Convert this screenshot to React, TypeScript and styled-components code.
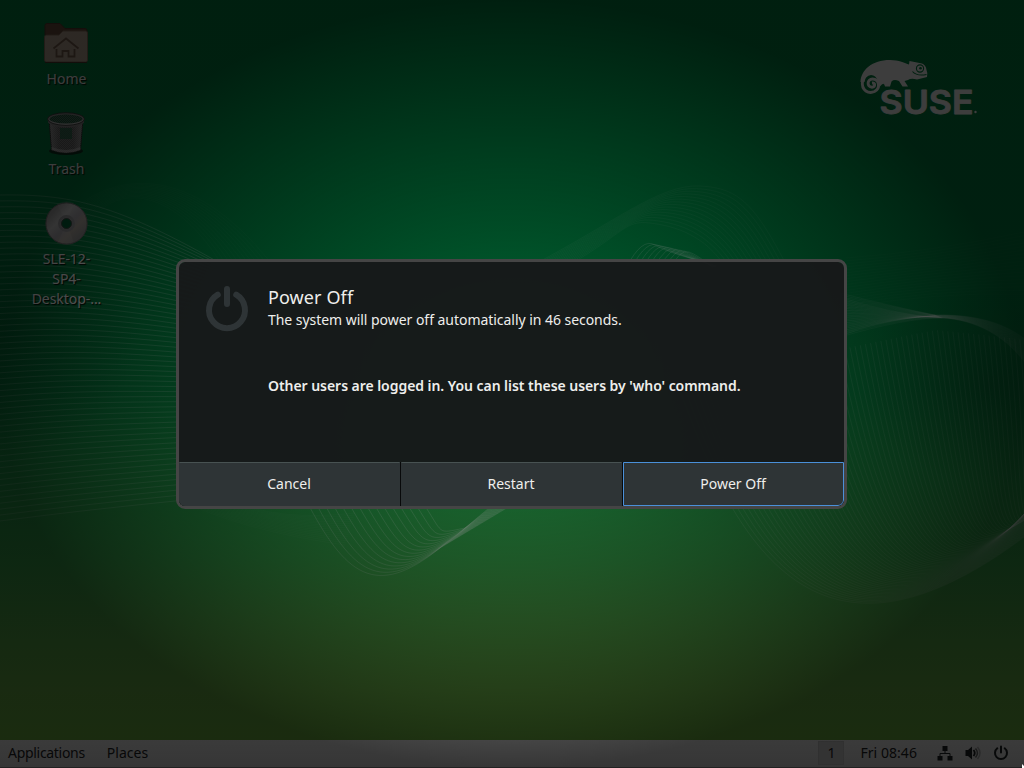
import React from "react";
import styled, { createGlobalStyle } from "styled-components";

const GlobalStyle = createGlobalStyle`
  * { box-sizing: border-box; }
  body { margin: 0; overflow: hidden; background: #000; }
`;

const Screen = styled.div`
  position: relative;
  display: flex;
  flex-direction: column;
  width: 1024px;
  height: 768px;
  overflow: hidden;
  font-family: "Noto Sans", "Open Sans", sans-serif;
  font-size: 14px;
  background: linear-gradient(
    #008240 0, #008442 290px, #088843 390px, #1f9646 480px,
    #36a149 560px, #4fa848 620px, #68b045 690px, #6cb43f 740px
  );
`;

const Waves = styled.svg`
  position: absolute;
  inset: 0;
  fill: none;
  stroke: #fff;
  stroke-width: 0.8;
`;

const Desktop = styled.main`
  position: relative;
  flex: 1;
  display: flex;
  justify-content: space-between;
  align-items: flex-start;
  padding: 18px 44px 0 20px;
`;

const Launchers = styled.div`
  display: flex;
  flex-direction: column;
  gap: 2px;
  width: 92px;
`;

const Launcher = styled.div`
  display: flex;
  flex-direction: column;
  align-items: center;
  min-height: 88px;
`;

const LauncherIcon = styled.svg`
  width: 48px;
  height: 48px;
  flex: none;
`;

const LauncherName = styled.span<{ $spacing?: number }>`
  margin-top: 3px;
  padding-left: 1px;
  color: #fff;
  line-height: 20px;
  text-align: center;
  white-space: pre-line;
  letter-spacing: ${(p) => p.$spacing ?? 0}px;
  text-shadow: 1px 1px 1px #000;
`;

const Logo = styled.svg`
  width: 120px;
  height: 60px;
  margin-top: 40px;
  overflow: visible;
`;

const Panel = styled.footer`
  position: relative;
  display: flex;
  align-items: center;
  height: 28px;
  padding: 0 15px 1px 8px;
  color: #1e2324;
  line-height: 26px;
  background: linear-gradient(#f4f4f4, #e2e2e2);
  border-bottom: 1px solid #8c8c8c;
`;

const PanelItem = styled.span<{ $gap?: number; $spacing?: number }>`
  margin-right: ${(p) => p.$gap ?? 0}px;
  letter-spacing: ${(p) => p.$spacing ?? 0}px;
`;

const Workspace = styled.span`
  width: 26px;
  height: 24px;
  margin: 0 16px 0 auto;
  line-height: 21px;
  text-align: center;
  background: #d4d4d4;
  border: 1px solid #cacaca;
`;

const Tray = styled.span`
  display: flex;
  align-items: center;
  gap: 12px;
`;

const TrayIcon = styled.svg`
  width: 16px;
  height: 16px;
  color: #1e2324;
`;

const Shade = styled.div`
  position: absolute;
  inset: 0;
  display: flex;
  align-items: center;
  justify-content: center;
  padding-right: 1px;
  background: radial-gradient(512px 384px at 50% 50%, rgba(0, 0, 0, 0.2), rgba(0, 0, 0, 0.76));
`;

const Dialog = styled.section`
  display: flex;
  flex-direction: column;
  width: 671px;
  height: 250px;
  overflow: hidden;
  color: #eeeeec;
  background: rgba(23, 25, 26, 0.97);
  background-clip: padding-box;
  border: 3px solid #454545;
  border-radius: 9px;
`;

const Body = styled.div`
  flex: 1;
  display: flex;
  gap: 17px;
  padding: 21px 24px 0;
`;

const PowerGlyph = styled.svg`
  width: 48px;
  height: 52px;
  color: #2e3436;
`;

const Message = styled.div`
  display: flex;
  flex-direction: column;
`;

const Title = styled.h1`
  margin: 2px 0 1px;
  font-size: 18px;
  font-weight: 400;
  line-height: 24px;
  letter-spacing: 0.1px;
`;

const Countdown = styled.p`
  margin: 0;
  line-height: 20px;
  letter-spacing: -0.04px;
`;

const Warning = styled.p`
  margin: 46px 0 0;
  font-weight: 600;
  line-height: 20px;
  letter-spacing: -0.05px;
`;

const Actions = styled.div`
  display: grid;
  grid-template-columns: repeat(3, 1fr);
  gap: 1px;
  height: 44px;
  background: #08090a;
`;

const Action = styled.button<{ $focused?: boolean }>`
  padding: 0 1px 1px 0;
  color: #eeeeec;
  font: inherit;
  background: #2e3436;
  border: 1px solid ${(p) => (p.$focused ? "#4a90d9" : "#2e3436")};
  border-top-color: ${(p) => (p.$focused ? "#4a90d9" : "#485252")};
  border-bottom-right-radius: ${(p) => (p.$focused ? 6 : 0)}px;
`;

const Pointer = styled.svg`
  position: absolute;
  right: 0;
  bottom: 0;
  width: 3px;
  height: 4px;
`;

type Wave = { d: string; o: number };

const series = (n: number, make: (u: number) => Wave): Wave[] =>
  Array.from({ length: n }, (_, i) => make(i / (n - 1)));

const waves: Wave[] = [
  ...series(56, (u) => ({
    d: `M0 ${195 + 326 * u}C70 ${194 + 318 * u} 115 ${203 + 304 * u} 225 ${266 + 230 * Math.pow(u, 1.25)}`,
    o: 0.26 - 0.06 * u,
  })),
  ...series(12, (u) => ({
    d: `M${70 + 20 * u} ${212 + 12 * u}C${115 - 5 * u} ${172 + 14 * u} ${190 - 20 * u} ${162 + 20 * u} ${270 - 50 * u} 262`,
    o: 0.04,
  })),
  ...series(15, (u) => ({
    d: `M${306 + 115 * u} 500C${345 + 100 * u} ${575 - 40 * u} ${375 + 60 * u} ${600 - 66 * u} ${440 + 25 * u} ${548 - 20 * u}L${520 - 25 * u} ${500 + 3 * u}`,
    o: 0.22,
  })),
  ...series(16, (u) => ({
    d: `M${180 + 50 * u} 500Q${240 + 40 * u} ${530 - 8 * u} ${345 + 10 * u} ${545 - 32 * u}`,
    o: 0.035,
  })),
  ...series(15, (u) => ({
    d: `M${535 + 36 * u} 264C${615 + 10 * u} ${222 + 10 * u} ${660 - 35 * u} ${184 + 36 * u} ${700 - 50 * u} ${186 + 37 * u}S${755 - 50 * u} ${205 + 30 * u} ${788 - 62 * u} 268`,
    o: 0.07,
  })),
  ...series(9, (u) => ({
    d: `M${626 + 45 * u} 268Q${642 + 38 * u} ${237 + 12 * u} ${655 + 34 * u} ${245 + 7 * u}T${718 - 5 * u} ${266 + 2 * u}`,
    o: 0.2,
  })),
  ...series(24, (u) => ({
    d: `M840 ${293 + 44 * u}Q${890 + 15 * u} ${306 + 12 * u} ${935 + 8 * u} ${315 + 3 * u}C975 ${314 + 6 * u} 1005 ${323 + 12 * u} 1026 ${340 + 24 * u}`,
    o: 0.1,
  })),
  ...series(24, (u) => ({
    d: `M840 ${337 - 40 * u}Q${870 + 20 * u} ${322 - 8 * u} ${935 + 8 * u} ${315 + 3 * u}`,
    o: 0.09,
  })),
  ...series(68, (u) => ({
    d: `M${680 + 345 * u} ${390 - 72 * Math.min(1, u * 1.35) + 22 * u * u}C${740 + 300 * u} ${560 - 50 * u} ${830 + 190 * u} ${706 - 130 * u} 1060 ${508 - 62 * u}`,
    o: 0.14,
  })),
  ...series(18, (u) => ({
    d: `M846 ${258 + 50 * u}Q930 ${252 + 40 * u} 1024 ${232 + 62 * u}`,
    o: 0.03,
  })),
];

const App = () => (
  <>
    <GlobalStyle />
    <Screen>
      <Waves width="1024" height="768" viewBox="0 0 1024 768">
        <defs>
          <radialGradient id="hollow">
            <stop offset="0" stopColor="#00180e" stopOpacity=".2" />
            <stop offset="1" stopColor="#00180e" stopOpacity="0" />
          </radialGradient>
        </defs>
        <ellipse cx="990" cy="385" rx="130" ry="100" fill="url(#hollow)" stroke="none" />
        <ellipse cx="0" cy="330" rx="140" ry="130" fill="url(#hollow)" stroke="none" />
        {waves.map((w, i) => (
          <path key={i} d={w.d} strokeOpacity={w.o} />
        ))}
      </Waves>

      <Desktop>
        <Launchers>
          <Launcher>
            <LauncherIcon viewBox="0 0 48 48">
              <path d="M3 17V7.500q0-2 2-2h13l5 5h20q2 0 2 2v5z" fill="#6d4f3d" stroke="#553b2c" />
              <path d="M2.500 19q0-2 2-2h12.500l4-4h22.500q2 0 2 2v27q0 2-2 2H4.500q-2 0-2-2z" fill="#bba997" stroke="#8c7461" />
              <path d="M3 44.500h42" stroke="#4e382b" />
              <path d="M11.500 30.500L24 20.500l12.500 10M14.500 31v7.500h6V33h6v5.500h6V31" fill="none" stroke="#78604f" strokeWidth="1.800" />
            </LauncherIcon>
            <LauncherName>Home</LauncherName>
          </Launcher>
          <Launcher>
            <LauncherIcon viewBox="0 0 48 48">
              <defs>
                <pattern id="mesh" width="2" height="2" patternUnits="userSpaceOnUse">
                  <rect width="1" height="1" fill="#bdbdbd" />
                  <rect x="1" y="1" width="1" height="1" fill="#bdbdbd" />
                </pattern>
                <linearGradient id="bin">
                  <stop offset="0" stopColor="#a5a5a5" />
                  <stop offset=".3" stopColor="#666" />
                  <stop offset=".7" stopColor="#666" />
                  <stop offset="1" stopColor="#a5a5a5" />
                </linearGradient>
                <linearGradient id="rim" x1="0" y1="0" x2="0" y2="1">
                  <stop offset="0" stopColor="#888" />
                  <stop offset="1" stopColor="#d5d5d5" />
                </linearGradient>
              </defs>
              <ellipse cx="24" cy="43" rx="17" ry="4" fill="#111" opacity=".7" />
              <path d="M7 10l2.500 32q14.500 6 29 0L41 10z" fill="url(#bin)" stroke="#333" />
              <path d="M7 10l2.500 32q14.500 6 29 0L41 10z" fill="url(#mesh)" opacity=".35" />
              <path d="M18 20h12v11H18z" fill="#1f6c48" opacity=".7" />
              <path d="M9.500 39q14.500 6 29 0v3q-14.500 6-29 0z" fill="#e5e5e5" opacity=".5" />
              <ellipse cx="24" cy="11" rx="17.500" ry="5.500" fill="#235c40" stroke="url(#rim)" strokeWidth="2" />
              <ellipse cx="24" cy="11" rx="16" ry="4.300" fill="url(#mesh)" opacity=".25" />
              <path d="M6 11.500q2 5.500 18 5.500t18-5.500v3q-3 4.500-18 4.500T6 14.500z" fill="#909090" />
              <ellipse cx="24" cy="11" rx="18.500" ry="6.300" fill="none" stroke="#222" strokeWidth=".7" />
            </LauncherIcon>
            <LauncherName>Trash</LauncherName>
          </Launcher>
          <Launcher>
            <LauncherIcon viewBox="0 0 48 48">
              <defs>
                <linearGradient id="disc" x1="0" y1="0" x2="1" y2="1">
                  <stop offset="0" stopColor="#aaa" />
                  <stop offset=".3" stopColor="#d0d0d0" />
                  <stop offset=".55" stopColor="#b1aeb5" />
                  <stop offset=".75" stopColor="#b8b0a7" />
                  <stop offset="1" stopColor="#999" />
                </linearGradient>
              </defs>
              <circle cx="24.500" cy="25.500" r="13" fill="none" stroke="url(#disc)" strokeWidth="15.500" />
              <path d="M22 20L15 6q9-5 17-1l-5 14zM27 31l5 14q-9 3-16-1l6-13z" fill="#fff" opacity=".12" />
              <circle cx="24.500" cy="25.500" r="20.600" fill="none" stroke="#757575" />
              <circle cx="24.500" cy="25.500" r="7" fill="none" stroke="#a0a0a4" strokeWidth="3" />
              <circle cx="24.500" cy="25.500" r="5" fill="#006939" stroke="#555" />
            </LauncherIcon>
            <LauncherName $spacing={-0.05}>{"SLE-12-\nSP4-\nDesktop-..."}</LauncherName>
          </Launcher>
        </Launchers>

        <Logo viewBox="860 58 120 60" fill="#fff">
          <path
            fillRule="evenodd"
            d="M860.500 82C861 70 872 60 890 60C899 60 905 63 909 64.500L909.500 61L922 63.500Q926 65 926.500 70L927.300 73L927 77L917 79.500Q911 78 908 80L904.500 81L908 86.500H902.500L899 81Q894 79 891.500 81.500L890 86.500H885Q884 81 880 86.500C878 84 878 75 871 75Q865 76 864.500 82Z"
          />
          <path d="M862.500 81C861 91 869 94 874.500 91.500C881 88 879 79 872.500 79C867 79 866.500 87 872 87.200C875.500 87 875.500 82.500 872 83" fill="none" stroke="#fff" strokeWidth="2.900" />
          <circle cx="920" cy="68.500" r="3.600" fill="#fff" stroke="#008341" strokeWidth="1.100" />
          <circle cx="920.500" cy="68.200" r="1.300" fill="#008341" />
          <path d="M912.500 71.500Q917 76.500 926.500 74.500" fill="none" stroke="#008341" strokeWidth="1.100" />
          <text
            x="879.500" y="113.500" textLength="94" lengthAdjust="spacingAndGlyphs"
            fontFamily="Inter, sans-serif" fontWeight="600" fontSize="32"
            stroke="#fff" strokeWidth=".8" strokeLinejoin="round"
          >SUSE</text>
          <circle cx="975.500" cy="112" r="1.200" />
        </Logo>
      </Desktop>

      <Panel>
        <PanelItem $gap={22} $spacing={-0.3}>Applications</PanelItem>
        <PanelItem>Places</PanelItem>
        <Workspace>1</Workspace>
        <PanelItem $gap={20} $spacing={0.05}>Fri 08:46</PanelItem>
        <Tray>
          <TrayIcon viewBox="0 0 16 16">
            <path d="M5.500 1h5v5h-5zM.5 11h5v4.500h-5zM10.500 11h5v4.500h-5z" fill="currentColor" />
            <path d="M8 5v3.500M3 12V8.500h10V12" fill="none" stroke="currentColor" />
          </TrayIcon>
          <TrayIcon viewBox="0 0 16 16" fill="none" stroke="currentColor">
            <path d="M.5 5h2.500L7 1.500v13L3 11H.500z" fill="currentColor" stroke="none" />
            <path d="M8.500 5q2.500 3 0 6" strokeWidth="1.800" />
            <path d="M10.500 3.500q4 4.500 0 9" strokeWidth="1.500" opacity=".65" />
            <path d="M12.500 2q5 6 0 12" strokeWidth="1.500" opacity=".3" />
          </TrayIcon>
          <TrayIcon viewBox="0 0 16 16" fill="none" stroke="currentColor" strokeWidth="2" strokeLinecap="round">
            <path d="M8 1.500v6M4.300 3.300a6 6 0 1 0 7.400 0" />
          </TrayIcon>
        </Tray>
      </Panel>

      <Shade>
        <Dialog>
          <Body>
            <PowerGlyph viewBox="0 0 48 52" fill="none" stroke="currentColor" strokeWidth="6" strokeLinecap="round">
              <path d="M24 6v15M14.800 11.700a18 18 0 1 0 18.400 0" />
            </PowerGlyph>
            <Message>
              <Title>Power Off</Title>
              <Countdown>The system will power off automatically in 46 seconds.</Countdown>
              <Warning>Other users are logged in. You can list these users by 'who' command.</Warning>
            </Message>
          </Body>
          <Actions>
            <Action>Cancel</Action>
            <Action>Restart</Action>
            <Action $focused>Power Off</Action>
          </Actions>
        </Dialog>
        <Pointer viewBox="0 0 3 4">
          <path d="M1 0L3 2V4H1z" fill="#fff" />
        </Pointer>
      </Shade>
    </Screen>
  </>
);

export default App;
